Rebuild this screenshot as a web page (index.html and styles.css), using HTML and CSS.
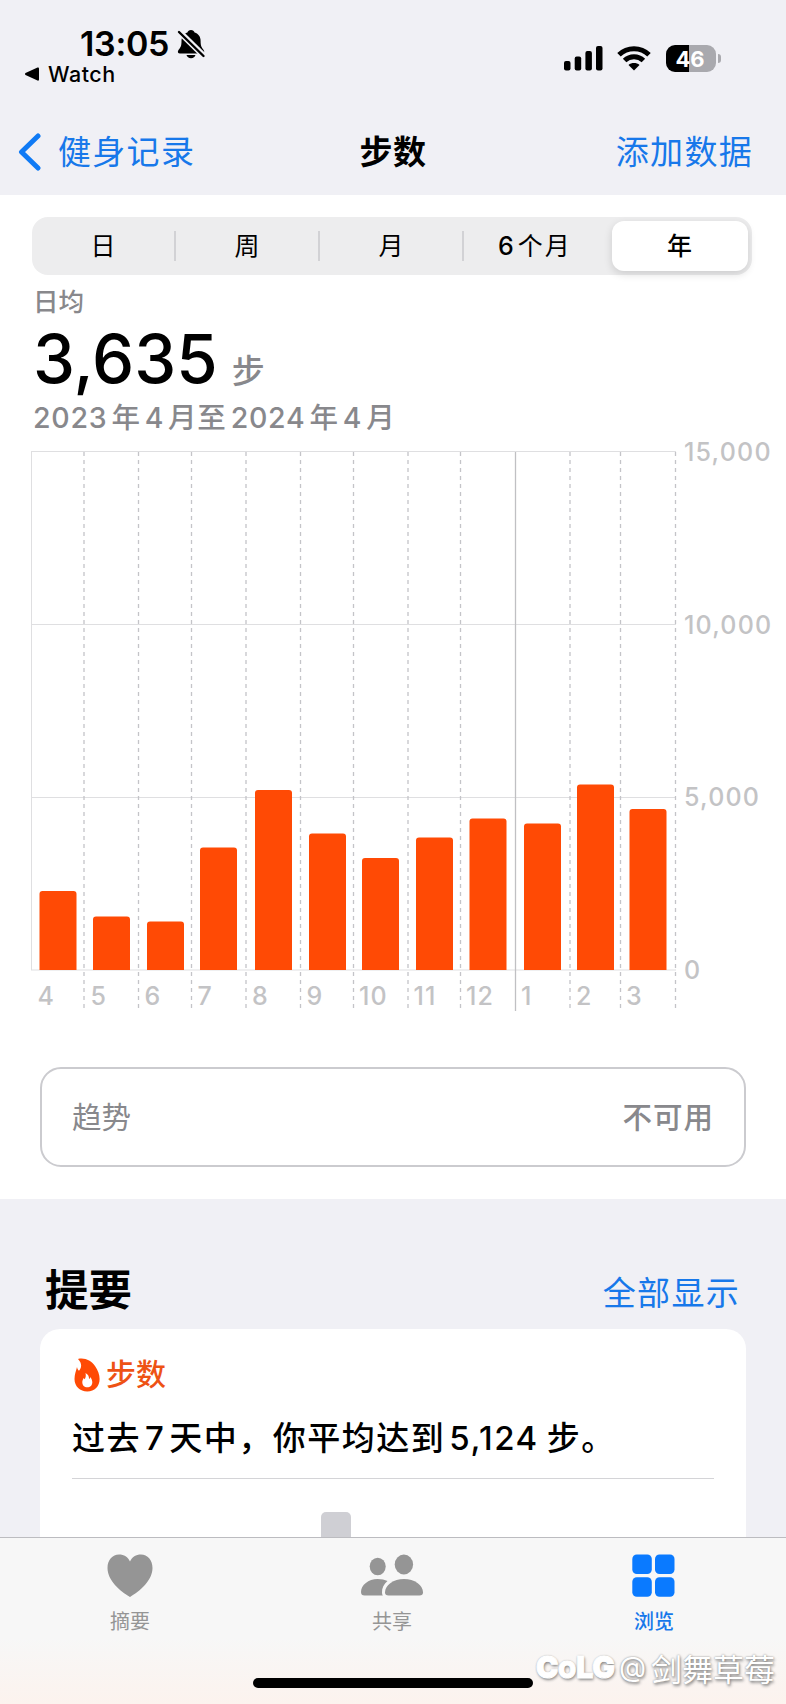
FILE: index.html
```
<!DOCTYPE html>
<html lang="zh-CN">

<head>
    <meta charset="UTF-8">
    <meta name="viewport" content="width=device-width, initial-scale=1.0">
    <title>步数</title>
    <link rel="stylesheet" href="styles.css">
</head>

<body>
    <header>
        <div class="status">
            <div class="status-left">
                <div class="clock">
                    <span class="time">13:05</span>
                    <svg class="bell" width="29" height="30" viewBox="0 0 29 30">
                        <path d="M14 1c2 0 3 1 3.600 2.500 4 1.200 6 4.500 6 8.500 0 5 1 6.500 3 9 1.300 1.800.500 3.500-1.500 3.500H3c-2 0-2.800-1.700-1.500-3.500C3.500 18.500 4.500 17 4.500 12c0-4 2-7.300 5.900-8.500C11 2 12 1 14 1z" />
                        <path d="M9.500 26h9c-.5 2-2.200 3.200-4.500 3.200S10 28 9.500 26z" />
                        <path class="bell-gap" d="M1 1.500 28 28" />
                        <path class="bell-slash" d="M2 3 26.500 27" />
                    </svg>
                </div>
                <div class="back-app">
                    <svg width="14" height="14" viewBox="0 0 14 14"><path d="M.5 6 12.500.500q1.500-.5 1.500 1v11q0 1.500-1.500 1L.5 8q-1-1 0-2z" /></svg>
                    <span>Watch</span>
                </div>
            </div>
            <div class="status-right">
                <svg width="39" height="26" viewBox="0 0 39 26">
                    <rect x="0" y="16" width="6.500" height="9.500" rx="2" />
                    <rect x="10.700" y="11.500" width="6.500" height="14" rx="2" />
                    <rect x="21.400" y="6" width="6.500" height="19.500" rx="2" />
                    <rect x="32" y="1" width="6.500" height="24.500" rx="2" />
                </svg>
                <svg class="wifi" width="34" height="25" viewBox="0 0 34 25">
                    <path class="arc" d="M2 8.800a21.500 21.500 0 0 1 30 0M7.600 14.500a13.500 13.500 0 0 1 18.800 0" />
                    <path d="M17 24.500 11.500 19c3-2.600 8-2.600 11 0z" />
                </svg>
                <div class="battery"><span>46</span></div>
                <div class="battery-tip"></div>
            </div>
        </div>
        <nav>
            <a class="back">
                <svg width="23" height="38" viewBox="0 0 23 38"><path d="M20 3 3.500 19 20 35" /></svg>
                <span>健身记录</span>
            </a>
            <h1>步数</h1>
            <a class="add">添加数据</a>
        </nav>
    </header>

    <main>
        <div class="segments">
            <div>日</div>
            <div class="divided">周</div>
            <div class="divided">月</div>
            <div class="divided"><span class="num">6</span><span class="gap">个月</span></div>
            <div class="selected">年</div>
        </div>

        <div class="stats">
            <div class="label">日均</div>
            <div class="value">3,635<span class="unit">步</span></div>
            <div class="range">2023<i></i>年<i></i>4<i></i>月至<i></i>2024<i></i>年<i></i>4<i></i>月</div>
        </div>

        <!-- 0 steps is y=530, 15,000 steps is y=12 -->
        <svg class="chart" width="786" height="580" viewBox="0 0 786 580">
            <path class="rule" d="M31 11.500H676M31 184.500H676M31 357.500H676M31 530H676M31.500 12V530" />
            <path class="month" d="M84 12V571M138.500 12V571M191.500 12V571M246 12V571M300.500 12V571M353.500 12V571M408 12V571M460.500 12V571M570 12V571M620.500 12V571M675.500 12V571" />
            <path class="year" d="M515.500 12V571" />
            <g class="bars">
                <path d="M39.500 530V454q0-3 3-3h31q3 0 3 3v76z" />
                <path d="M93 530V479.500q0-3 3-3h31q3 0 3 3V530z" />
                <path d="M147 530V484.500q0-3 3-3h31q3 0 3 3V530z" />
                <path d="M200 530V410.500q0-3 3-3h31q3 0 3 3V530z" />
                <path d="M255 530V353q0-3 3-3h31q3 0 3 3V530z" />
                <path d="M309 530V396.500q0-3 3-3h31q3 0 3 3V530z" />
                <path d="M362 530V421q0-3 3-3h31q3 0 3 3V530z" />
                <path d="M416 530V400.500q0-3 3-3h31q3 0 3 3V530z" />
                <path d="M469.500 530V381.500q0-3 3-3h31q3 0 3 3V530z" />
                <path d="M524 530V386.500q0-3 3-3h31q3 0 3 3V530z" />
                <path d="M577 530V347.500q0-3 3-3h31q3 0 3 3V530z" />
                <path d="M629.500 530V372q0-3 3-3h31q3 0 3 3V530z" />
            </g>
            <g class="axis">
                <text x="37.500" y="565">4</text>
                <text x="90.500" y="565">5</text>
                <text x="144.500" y="565">6</text>
                <text x="197.500" y="565">7</text>
                <text x="252" y="565">8</text>
                <text x="306.500" y="565">9</text>
                <text x="359" y="565">10</text>
                <text x="413.500" y="565">11</text>
                <text x="466" y="565">12</text>
                <text x="521" y="565">1</text>
                <text x="576" y="565">2</text>
                <text x="626" y="565">3</text>
                <text x="684" y="21">15,000</text>
                <text x="684" y="194">10,000</text>
                <text x="684" y="366">5,000</text>
                <text x="684" y="539">0</text>
            </g>
        </svg>

        <div class="trend">
            <span>趋势</span>
            <b>不可用</b>
        </div>
    </main>

    <section>
        <div class="section-head">
            <h2>提要</h2>
            <a>全部显示</a>
        </div>
        <div class="card">
            <div class="card-title">
                <svg width="26" height="34" viewBox="0 0 26 34">
                    <path fill="#ff4a05" d="M4 1c7-1.500 13 1.500 17 7 3 4.500 4.600 8.500 4.600 13 0 7.500-5 12.500-12.300 12.500S.5 28.500.5 21c0-4.500 1.500-8 2.500-12 .2 1.500.8 2.700 2 3.700C8 9.500 8 5 4 1z" />
                    <path fill="#fff" d="M11.500 15c4 2.500 3.200 4.500 3.700 6 .9-.5 1-1.200 1.100-2 1.200 1.700 2 3.500 2 5.300 0 3-2 5-5 5s-5-2-5-5c0-2 .8-3 1.300-4.300l1 1.300c1.200-1.700 1.500-3.800.9-6.300z" />
                </svg>
                <span>步数</span>
            </div>
            <p>过去<i></i>7<i></i>天中，你平均达到<i></i>5,124<i></i><i></i>步。</p>
            <div class="mini-chart"><div class="mini-bar"></div></div>
        </div>
    </section>

    <footer>
        <div class="tab">
            <svg width="64" height="46" viewBox="0 0 64 46"><path d="M32 44C22 38 9.500 27.500 9.500 15 9.500 7 14.500 1.500 21 1.500c5 0 9 2.500 11 7 2-4.500 6-7 11-7C49.500 1.500 54.500 7 54.500 15 54.500 27.500 42 38 32 44z" /></svg>
            <span>摘要</span>
        </div>
        <div class="tab">
            <svg width="64" height="46" viewBox="0 0 64 46">
                <ellipse cx="17.700" cy="13.500" rx="8" ry="8.800" />
                <ellipse cx="43.900" cy="11.500" rx="9.200" ry="10" />
                <path d="M27.500 28C23.800 31 21.800 35 22 39.500q0 2 .8 3H4.500q-3.500 0-3.500-3.500C1 32 8.500 26 17.500 26c4 0 7.300.7 10 2z" />
                <path d="M44 26c10.500 0 19 6 19 13.500 0 2-1.200 3-3.500 3h-31c-2.300 0-3.500-1-3.500-3C25 32 33.500 26 44 26z" />
            </svg>
            <span>共享</span>
        </div>
        <div class="tab active">
            <svg width="64" height="46" viewBox="0 0 64 46">
                <rect x="10.300" y="1.500" width="19.500" height="19.500" rx="4.500" />
                <rect x="33" y="1.500" width="19.500" height="19.500" rx="4.500" />
                <rect x="10.300" y="24.300" width="19.500" height="19.500" rx="4.500" />
                <rect x="33" y="24.300" width="19.500" height="19.500" rx="4.500" />
            </svg>
            <span>浏览</span>
        </div>
        <div class="home"></div>
        <div class="watermark"><b>C<small>O</small>LG</b><span class="at">@</span><span>剑舞草莓</span></div>
    </footer>
</body>

</html>
```
FILE: styles.css
```
* {
    box-sizing: border-box;
}

body {
    margin: 0;
    width: 786px;
    height: 1704px;
    overflow: hidden;
    display: flex;
    flex-direction: column;
    background: #f0f0f5;
    color: #000;
    font-family: Inter, "Noto Sans CJK SC", sans-serif;
}

h1, h2, p {
    margin: 0;
}

svg {
    display: block;
    flex: none;
}

/* thin space between digits and hanzi */
i {
    display: inline-block;
    width: 4px;
}

header {
    height: 195px;
}

.status {
    height: 103px;
    display: flex;
    justify-content: space-between;
}

.status-left {
    padding: 24px 0 0 25px;
}

.clock {
    display: flex;
    padding-left: 55px;
    height: 38px;
}

.time {
    width: 97px;
    font-size: 34px;
    line-height: 40px;
    font-weight: 600;
    letter-spacing: -0.3px;
}

.bell {
    margin-top: 5px;
}

.bell-gap {
    stroke: #f0f0f5;
    stroke-width: 6;
}

.bell-slash {
    stroke: #000;
    stroke-width: 2.4;
    stroke-linecap: round;
}

.back-app {
    display: flex;
    align-items: center;
    gap: 9px;
    height: 24px;
    font-size: 21.5px;
    font-weight: 500;
    letter-spacing: 0.5px;
}

.status-right {
    display: flex;
    align-items: flex-start;
    padding: 45px 65px 0 0;
}

.wifi {
    margin: 1px 15px 0 14px;
}

.wifi .arc {
    fill: none;
    stroke: #000;
    stroke-width: 5;
}

.battery {
    width: 50px;
    height: 27px;
    padding-right: 2px;
    border-radius: 9px;
    background: linear-gradient(to right, #000 46%, #a9a9ae 46%);
    color: #fff;
    font-size: 22px;
    line-height: 28px;
    font-weight: 700;
    text-align: center;
}

.battery-tip {
    width: 3px;
    height: 9px;
    margin: 9px 0 0 2px;
    border-radius: 0 4px 4px 0;
    background: #a9a9ae;
}

nav {
    display: grid;
    grid-template-columns: 1fr auto 1fr;
    align-items: center;
    height: 97px;
    padding: 0 33px 0 18px;
    font-size: 33px;
    line-height: 48px;
    letter-spacing: 1.3px;
}

nav h1 {
    font-size: 33px;
    font-weight: 600;
    letter-spacing: 0.5px;
    padding-left: 15px;
}

a {
    color: #1778ea;
}

.back {
    display: flex;
    align-items: center;
    gap: 17px;
}

.back path {
    fill: none;
    stroke: #0f7af5;
    stroke-width: 5;
    stroke-linecap: round;
    stroke-linejoin: round;
}

.add {
    text-align: right;
}

main {
    height: 1004px;
    padding-top: 22px;
    background: #fff;
}

.segments {
    display: flex;
    width: 720px;
    height: 58px;
    margin-left: 32px;
    padding: 4px 4px 4px 0;
    border-radius: 16px;
    background: #ededee;
    font-size: 25px;
    line-height: 51px;
    text-align: center;
}

.segments div {
    width: 144px;
}

.segments div:first-child {
    width: 142px;
}

.segments .divided {
    padding-left: 2px;
    background: linear-gradient(#d2d2d5, #d2d2d5) 0 10px / 2px 30px no-repeat;
}

.segments .num {
    font-weight: 500;
}

.segments .gap {
    margin-left: 4px;
    letter-spacing: 2px;
}

.segments .selected {
    width: 136px;
    margin-left: 6px;
    padding-right: 1px;
    border-radius: 12px;
    background: #fff;
    font-weight: 500;
    box-shadow: 0 3px 8px rgba(0, 0, 0, 0.14);
}

.stats {
    height: 165px;
    padding-left: 33px;
    color: #88888c;
}

.label {
    padding-top: 10px;
    font-size: 25.5px;
    line-height: 33px;
    font-weight: 500;
}

.value {
    height: 80px;
    color: #000;
    font-size: 67px;
    line-height: 82px;
    font-weight: 500;
}

.unit {
    margin-left: 14px;
    color: #88888c;
    font-size: 33px;
}

.range {
    font-size: 28.5px;
    line-height: 40px;
    font-weight: 500;
    letter-spacing: 0.75px;
}

.chart {
    overflow: visible;
}

.rule {
    stroke: #dfdfe1;
}

.month {
    stroke: #c4c4c8;
    stroke-width: 1.3;
    stroke-dasharray: 4 4;
}

.year {
    stroke: #c0c0c3;
    stroke-width: 1.3;
}

.bars {
    fill: #ff4a05;
}

.axis {
    fill: #c3c3c5;
    font-size: 25px;
    font-weight: 500;
    letter-spacing: 1.2px;
}

.trend {
    display: flex;
    align-items: center;
    justify-content: space-between;
    width: 706px;
    height: 100px;
    margin: 47px 0 0 40px;
    padding: 0 30px 4px;
    border: 2px solid #cbcbcf;
    border-radius: 21px;
    color: #88888c;
    font-size: 29.5px;
}

.trend b {
    font-weight: 500;
    letter-spacing: 1px;
}

section {
    height: 338px;
    padding: 0 40px;
}

.section-head {
    display: flex;
    justify-content: space-between;
    height: 130px;
    padding: 60px 6px 0 5px;
}

h2 {
    font-size: 43.5px;
    line-height: 62px;
    font-weight: 700;
}

.section-head a {
    padding-top: 10px;
    font-size: 33px;
    line-height: 48px;
    letter-spacing: 1.3px;
}

.card {
    height: 208px;
    padding: 28px 32px 0;
    border-radius: 20px 20px 0 0;
    background: #fff;
}

.card-title {
    display: flex;
    align-items: center;
    gap: 6px;
    height: 36px;
    padding-left: 2px;
    color: #ee5214;
    font-size: 30px;
    line-height: 32px;
    font-weight: 500;
}

.card-title span {
    padding-bottom: 2px;
}

.card p {
    height: 86px;
    padding-top: 21px;
    border-bottom: 1px solid #d4d4d7;
    font-size: 33px;
    line-height: 48px;
    font-weight: 500;
    letter-spacing: 1.5px;
    white-space: nowrap;
}

.mini-chart {
    padding: 33px 0 0 249px;
}

.mini-bar {
    width: 30px;
    height: 25px;
    border-radius: 5px 5px 0 0;
    background: #cfcfd4;
}

footer {
    position: relative;
    display: flex;
    height: 167px;
    border-top: 1px solid #bcbcc0;
    background: linear-gradient(#f7f7f7 60%, #fcf3ee);
}

.tab {
    display: flex;
    flex-direction: column;
    align-items: center;
    width: 262px;
    padding: 15px 2px 0 0;
    fill: #959595;
    color: #959595;
    font-size: 20px;
    line-height: 30px;
}

.tab span {
    margin-top: 8px;
}

.tab.active {
    fill: #0a7aff;
    color: #1778ea;
    font-weight: 500;
}

.home {
    position: absolute;
    left: 253px;
    bottom: 16px;
    width: 280px;
    height: 10px;
    border-radius: 5px;
    background: #000;
}

.watermark {
    position: absolute;
    right: 11px;
    bottom: 13px;
    display: flex;
    align-items: center;
    height: 48px;
    color: #fff;
    font-size: 31px;
    text-shadow: 0 0 2px #888, 1px 2px 3px #888;
}

.watermark b {
    font-size: 30px;
    font-weight: 900;
    letter-spacing: 0;
    -webkit-text-stroke: 1px #fff;
}

.watermark small {
    font-size: 23px;
}

.watermark .at {
    margin: 0 5px 0 4px;
    font-size: 28px;
}
```
